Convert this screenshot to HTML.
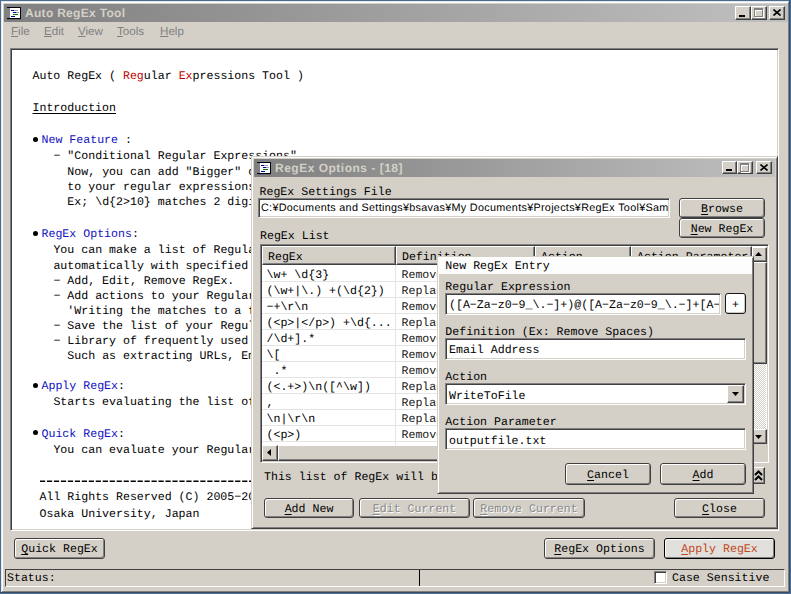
<!DOCTYPE html><html><head><meta charset="utf-8"><style>
*{box-sizing:border-box;margin:0;padding:0}
html,body{width:791px;height:594px;overflow:hidden;background:#45709f;position:relative;text-rendering:geometricPrecision}
div{position:absolute}
svg{position:absolute}
.title{background:linear-gradient(to right,#808080,#c0c0c0)}
.tt{color:#d4d0c8;font:bold 12px "Liberation Sans",sans-serif;white-space:nowrap;line-height:14px}
.cb{background:#d4d0c8;border:1px solid;border-color:#fff #404040 #404040 #fff;box-shadow:inset -1px -1px #808080,inset 1px 1px #d4d0c8}
.sunk{background:#fff;border:1px solid;border-color:#808080 #fff #fff #808080;box-shadow:inset 1px 1px #404040,inset -1px -1px #d4d0c8}
.m{font-family:"Liberation Mono",monospace;font-size:11.6px;white-space:pre;color:#000;line-height:14px}
.s{font-family:"Liberation Sans",sans-serif;font-size:12px;white-space:pre;color:#000;line-height:14px}
.btn{background:#d4d0c8;border:1px solid #404040;border-radius:3px;box-shadow:inset 1px 1px #fff,inset -1px -1px #808080}
.u{text-decoration:underline;text-underline-offset:2px}
.bl{color:#1010c0}
.rd{color:#c00000}
.dis{color:#8a8a8a;text-shadow:1px 1px #fff}
.chk{background-image:linear-gradient(45deg,#fff 25%,transparent 25%,transparent 75%,#fff 75%),linear-gradient(45deg,#fff 25%,#d4d0c8 25%,#d4d0c8 75%,#fff 75%);background-size:2px 2px;background-position:0 0,1px 1px}
</style></head><body>
<div style="left:0px;top:0px;width:790px;height:593px;background:#d4d0c8;"></div>
<div style="left:0px;top:0px;width:790px;height:1px;background:#4d6b8b;"></div>
<div style="left:0px;top:0px;width:1px;height:593px;background:#4d6b8b;"></div>
<div style="left:1px;top:1px;width:788px;height:1px;background:#dde8f0;"></div>
<div style="left:1px;top:1px;width:1px;height:591px;background:#dde8f0;"></div>
<div style="left:2px;top:2px;width:786px;height:1px;background:#fff;"></div>
<div style="left:2px;top:2px;width:1px;height:589px;background:#fff;"></div>
<div style="left:788px;top:2px;width:1px;height:590px;background:#808080;"></div>
<div style="left:2px;top:591px;width:787px;height:1px;background:#808080;"></div>
<div style="left:789px;top:0px;width:1px;height:593px;background:#3c4a5c;"></div>
<div style="left:0px;top:592px;width:790px;height:1px;background:#3c4a5c;"></div>
<div class="title" style="left:4px;top:4px;width:784px;height:18px"></div>
<svg style="left:7px;top:7px" width="14" height="13" viewBox="0 0 14 13">
<rect x="3" y="1" width="10" height="11" fill="#fff"/>
<rect x="0" y="0" width="14" height="1" fill="#000010"/>
<rect x="0" y="11" width="14" height="1.2" fill="#000010"/>
<rect x="13" y="0" width="1" height="12" fill="#000010"/>
<rect x="4" y="3" width="3" height="1" fill="#0000a0"/><rect x="7" y="3" width="4" height="1" fill="#a0a0a0"/>
<rect x="6" y="5" width="3" height="1" fill="#0000a0"/><rect x="9" y="5" width="3" height="1" fill="#a0a0a0"/>
<rect x="6" y="7" width="5" height="1" fill="#008000"/>
<rect x="4" y="9" width="4" height="1" fill="#0000a0"/>
</svg>
<div class="tt" style="left:25px;top:6px;letter-spacing:0.3px">Auto RegEx Tool</div>
<div class="cb" style="left:735px;top:6px;width:16px;height:14px"></div>
<div style="left:739px;top:15px;width:6px;height:2px;background:#000;"></div>
<div class="cb" style="left:751px;top:6px;width:16px;height:14px"></div>
<div style="left:755px;top:9px;width:9px;height:9px;border:1px solid #fff;border-top-width:2px"></div>
<div style="left:754px;top:8px;width:9px;height:9px;border:1px solid #808080;border-top-width:2px"></div>
<div class="cb" style="left:769px;top:6px;width:16px;height:14px"></div>
<svg style="left:773px;top:9px" width="8" height="7" viewBox="0 0 8 7"><path d="M0.5 0.5L7.5 6.5M7.5 0.5L0.5 6.5" stroke="#000" stroke-width="1.6"/></svg>
<div class="s" style="left:11px;top:25px;color:#808080;font-size:11.6px"><span class="u" style="text-underline-offset:1px">F</span>ile</div>
<div class="s" style="left:44px;top:25px;color:#808080;font-size:11.6px"><span class="u" style="text-underline-offset:1px">E</span>dit</div>
<div class="s" style="left:78px;top:25px;color:#808080;font-size:11.6px"><span class="u" style="text-underline-offset:1px">V</span>iew</div>
<div class="s" style="left:117px;top:25px;color:#808080;font-size:11.6px"><span class="u" style="text-underline-offset:1px">T</span>ools</div>
<div class="s" style="left:160px;top:25px;color:#808080;font-size:11.6px"><span class="u" style="text-underline-offset:1px">H</span>elp</div>
<div class="sunk" style="left:10px;top:48px;width:769px;height:483px"></div>
<div class="m" style="left:32.5px;top:70px;">Auto RegEx ( <span class="rd">Reg</span>ular <span class="rd">Ex</span>pressions Tool )</div>
<div class="m" style="left:32.5px;top:102px;"><span class="u">Introduction</span></div>
<div style="left:33px;top:136.5px;width:5px;height:5px;border-radius:50%;background:#000"></div>
<div class="m" style="left:41.5px;top:134px;"><span class="bl">New Feature</span> :</div>
<div class="m" style="left:53.41px;top:150px;">− &quot;Conditional Regular Expressions&quot;</div>
<div class="m" style="left:67.35px;top:166px;">Now, you can add &quot;Bigger&quot; or &quot;Smaller&quot; conditions</div>
<div class="m" style="left:67.35px;top:181px;">to your regular expressions.</div>
<div class="m" style="left:67.35px;top:196px;">Ex; \d{2&gt;10} matches 2 digit numbers bigger than 10</div>
<div style="left:33px;top:230.5px;width:5px;height:5px;border-radius:50%;background:#000"></div>
<div class="m" style="left:41.5px;top:228px;"><span class="bl">RegEx Options</span>:</div>
<div class="m" style="left:53.41px;top:244px;">You can make a list of Regular Expressions to be evaluated</div>
<div class="m" style="left:53.41px;top:260px;">automatically with specified actions.</div>
<div class="m" style="left:53.41px;top:275px;">− Add, Edit, Remove RegEx.</div>
<div class="m" style="left:53.41px;top:290px;">− Add actions to your Regular Expressions. Ex:</div>
<div class="m" style="left:67.35px;top:305px;">&#x27;Writing the matches to a file&#x27;</div>
<div class="m" style="left:53.41px;top:320px;">− Save the list of your Regular Expressions.</div>
<div class="m" style="left:53.41px;top:335px;">− Library of frequently used Regular Expressions.</div>
<div class="m" style="left:67.35px;top:350px;">Such as extracting URLs, Emails...</div>
<div style="left:33px;top:382.5px;width:5px;height:5px;border-radius:50%;background:#000"></div>
<div class="m" style="left:41.5px;top:380px;"><span class="bl">Apply RegEx</span>:</div>
<div class="m" style="left:53.41px;top:396px;">Starts evaluating the list of Regular Expressions.</div>
<div style="left:33px;top:430.4px;width:5px;height:5px;border-radius:50%;background:#000"></div>
<div class="m" style="left:41.5px;top:428px;"><span class="bl">Quick RegEx</span>:</div>
<div class="m" style="left:53.41px;top:444px;">You can evaluate your Regular Expressions quickly.</div>
<div class="m" style="left:39.47px;top:491px;">All Rights Reserved (C) 2005−2006</div>
<div class="m" style="left:39.47px;top:508px;">Osaka University, Japan</div>
<svg style="left:39px;top:478px" width="220" height="6"><line x1="1" y1="3.2" x2="220" y2="3.2" stroke="#000" stroke-width="1.6" stroke-dasharray="5.2 1.77"/></svg>
<div class="btn" style="left:14px;top:538px;width:91px;height:21px;"></div>
<div class="m " style="left:14px;top:543px;width:91px;text-align:center;color:#000"><span class="u">Q</span>uick RegEx</div>
<div class="btn" style="left:544px;top:538px;width:111px;height:21px;"></div>
<div class="m " style="left:544px;top:543px;width:111px;text-align:center;color:#000"><span class="u">R</span>egEx Options</div>
<div class="btn" style="left:664px;top:538px;width:111px;height:21px;border-color:#000;background:#e2e0dc"></div>
<div class="m " style="left:664px;top:543px;width:111px;text-align:center;color:#c04818"><span class="u">A</span>pply RegEx</div>
<div style="left:5px;top:569px;width:780px;height:18px;border:1px solid;border-color:#404040 #fff #fff #404040"></div>
<div style="left:419px;top:570px;width:1px;height:16px;background:#000;"></div>
<div class="m" style="left:7px;top:572px;">Status:</div>
<div class="sunk" style="left:654px;top:571px;width:13px;height:13px"></div>
<div class="m" style="left:672px;top:572px;">Case Sensitive</div>
<div style="left:251px;top:156px;width:527px;height:373px;background:#d4d0c8;border:1px solid;border-color:#d4d0c8 #404040 #404040 #d4d0c8;box-shadow:inset 1px 1px #fff,inset -1px -1px #808080"></div>
<div class="title" style="left:254px;top:159px;width:521px;height:18px"></div>
<svg style="left:257px;top:162px" width="14" height="13" viewBox="0 0 14 13">
<rect x="3" y="1" width="10" height="11" fill="#fff"/>
<rect x="0" y="0" width="14" height="1" fill="#000010"/>
<rect x="0" y="11" width="14" height="1.2" fill="#000010"/>
<rect x="13" y="0" width="1" height="12" fill="#000010"/>
<rect x="4" y="3" width="3" height="1" fill="#0000a0"/><rect x="7" y="3" width="4" height="1" fill="#a0a0a0"/>
<rect x="6" y="5" width="3" height="1" fill="#0000a0"/><rect x="9" y="5" width="3" height="1" fill="#a0a0a0"/>
<rect x="6" y="7" width="5" height="1" fill="#008000"/>
<rect x="4" y="9" width="4" height="1" fill="#0000a0"/>
</svg>
<div class="tt" style="left:275px;top:161px;letter-spacing:0.5px">RegEx Options - [18]</div>
<div class="cb" style="left:722px;top:161px;width:15px;height:13px"></div>
<div style="left:726px;top:169px;width:6px;height:2px;background:#000;"></div>
<div class="cb" style="left:737px;top:161px;width:16px;height:13px"></div>
<div style="left:741px;top:164px;width:9px;height:9px;border:1px solid #fff;border-top-width:2px"></div>
<div style="left:740px;top:163px;width:9px;height:9px;border:1px solid #808080;border-top-width:2px"></div>
<div class="cb" style="left:756px;top:161px;width:16px;height:13px"></div>
<svg style="left:760px;top:164px" width="8" height="7" viewBox="0 0 8 7"><path d="M0.5 0.5L7.5 6.5M7.5 0.5L0.5 6.5" stroke="#000" stroke-width="1.6"/></svg>
<div class="m" style="left:259.5px;top:186px;">RegEx Settings File</div>
<div class="sunk" style="left:258px;top:198px;width:412px;height:20px"></div>
<div class="s" style="left:261px;top:201.5px;font-size:10.8px;letter-spacing:0.3px;width:407px;overflow:hidden;line-height:12px">C:¥Documents and Settings¥bsavas¥My Documents¥Projects¥RegEx Tool¥Sample.xml</div>
<div class="btn" style="left:679px;top:198px;width:86px;height:20px;"></div>
<div class="m " style="left:679px;top:203px;width:86px;text-align:center;color:#000"><span class="u">B</span>rowse</div>
<div class="btn" style="left:679px;top:218px;width:86px;height:20px;"></div>
<div class="m " style="left:679px;top:223px;width:86px;text-align:center;color:#000"><span class="u">N</span>ew RegEx</div>
<div class="m" style="left:260px;top:230px;">RegEx List</div>
<div style="left:260px;top:244px;width:509px;height:219px;background:#fff;border:1px solid;border-color:#808080 #fff #fff #808080;box-shadow:inset 1px 1px #404040,inset -1px -1px #d4d0c8"></div>
<div class="cb" style="left:262px;top:246px;width:134px;height:19px"></div>
<div class="m" style="left:268px;top:251px;">RegEx</div>
<div class="cb" style="left:396px;top:246px;width:139px;height:19px"></div>
<div class="m" style="left:402px;top:251px;">Definition</div>
<div class="cb" style="left:535px;top:246px;width:96px;height:19px"></div>
<div class="m" style="left:541px;top:251px;">Action</div>
<div class="cb" style="left:631px;top:246px;width:121px;height:19px"></div>
<div class="m" style="left:637px;top:251px;">Action Parameter</div>
<div style="left:262px;top:281px;width:490px;height:1px;background:#e4e4e4;"></div>
<div class="m" style="left:266.5px;top:269px;">\w+ \d{3}</div>
<div class="m" style="left:401.5px;top:269px;color:#202020">Remove</div>
<div style="left:262px;top:297px;width:490px;height:1px;background:#e4e4e4;"></div>
<div class="m" style="left:266.5px;top:285px;">(\w+|\.) +(\d{2})</div>
<div class="m" style="left:401.5px;top:285px;color:#202020">Replace</div>
<div style="left:262px;top:313px;width:490px;height:1px;background:#e4e4e4;"></div>
<div class="m" style="left:266.5px;top:301px;">−+\r\n</div>
<div class="m" style="left:401.5px;top:301px;color:#202020">Remove</div>
<div style="left:262px;top:329px;width:490px;height:1px;background:#e4e4e4;"></div>
<div class="m" style="left:266.5px;top:317px;">(&lt;p&gt;|&lt;/p&gt;) +\d{...</div>
<div class="m" style="left:401.5px;top:317px;color:#202020">Replace</div>
<div style="left:262px;top:345px;width:490px;height:1px;background:#e4e4e4;"></div>
<div class="m" style="left:266.5px;top:333px;">/\d+].*</div>
<div class="m" style="left:401.5px;top:333px;color:#202020">Remove</div>
<div style="left:262px;top:361px;width:490px;height:1px;background:#e4e4e4;"></div>
<div class="m" style="left:266.5px;top:349px;">\[</div>
<div class="m" style="left:401.5px;top:349px;color:#202020">Remove</div>
<div style="left:262px;top:377px;width:490px;height:1px;background:#e4e4e4;"></div>
<div class="m" style="left:266.5px;top:365px;"> .*</div>
<div class="m" style="left:401.5px;top:365px;color:#202020">Remove</div>
<div style="left:262px;top:393px;width:490px;height:1px;background:#e4e4e4;"></div>
<div class="m" style="left:266.5px;top:381px;">(&lt;.+&gt;)\n([^\w])</div>
<div class="m" style="left:401.5px;top:381px;color:#202020">Replace</div>
<div style="left:262px;top:409px;width:490px;height:1px;background:#e4e4e4;"></div>
<div class="m" style="left:266.5px;top:397px;">,</div>
<div class="m" style="left:401.5px;top:397px;color:#202020">Replace</div>
<div style="left:262px;top:425px;width:490px;height:1px;background:#e4e4e4;"></div>
<div class="m" style="left:266.5px;top:413px;">\n|\r\n</div>
<div class="m" style="left:401.5px;top:413px;color:#202020">Replace</div>
<div style="left:262px;top:441px;width:490px;height:1px;background:#e4e4e4;"></div>
<div class="m" style="left:266.5px;top:429px;">(&lt;p&gt;)</div>
<div class="m" style="left:401.5px;top:429px;color:#202020">Remove</div>
<div style="left:395px;top:265px;width:1px;height:180px;background:#e4e4e4;"></div>
<div class="chk" style="left:752px;top:247px;width:14px;height:197px"></div>
<div class="cb" style="left:752px;top:247px;width:15px;height:15px"></div>
<svg style="left:755px;top:252px" width="7" height="4" viewBox="0 0 7 4"><path d="M0 4L3.5 0L7 4Z" fill="#000"/></svg>
<div class="cb" style="left:752px;top:262px;width:15px;height:102px"></div>
<div class="cb" style="left:752px;top:429px;width:15px;height:15px"></div>
<svg style="left:755px;top:435px" width="7" height="4" viewBox="0 0 7 4"><path d="M0 0L7 0L3.5 4Z" fill="#000"/></svg>
<div class="cb" style="left:262px;top:445px;width:16px;height:16px"></div>
<svg style="left:267px;top:449px" width="4" height="7" viewBox="0 0 4 7"><path d="M4 0L4 7L0 3.5Z" fill="#000"/></svg>
<div class="cb" style="left:278px;top:445px;width:474px;height:16px"></div>
<div style="left:752px;top:444px;width:15px;height:17px;background:#d4d0c8;"></div>
<div class="m" style="left:264px;top:471px;">This list of RegEx will be saved automatically.</div>
<div class="btn" style="left:264px;top:498px;width:90px;height:20px;"></div>
<div class="m " style="left:264px;top:503px;width:90px;text-align:center;color:#000"><span class="u">A</span>dd New</div>
<div class="btn" style="left:359px;top:498px;width:111px;height:20px;"></div>
<div class="m dis" style="left:359px;top:503px;width:111px;text-align:center;color:#8a8a8a"><span class="u">E</span>dit Current</div>
<div class="btn" style="left:473px;top:498px;width:112px;height:20px;"></div>
<div class="m dis" style="left:473px;top:503px;width:112px;text-align:center;color:#8a8a8a"><span class="u">R</span>emove Current</div>
<div class="btn" style="left:674px;top:498px;width:91px;height:20px;"></div>
<div class="m " style="left:674px;top:503px;width:91px;text-align:center;color:#000"><span class="u">C</span>lose</div>
<div class="cb" style="left:750px;top:467px;width:15px;height:17px"></div>
<div style="left:437px;top:256px;width:317px;height:238px;background:#d4d0c8;border:1px solid;border-color:#d4d0c8 #404040 #404040 #d4d0c8;box-shadow:inset 1px 1px #fff,inset -1px -1px #808080"></div>
<div style="left:439px;top:258px;width:313px;height:16px;background:#fdfdfd;"></div>
<div class="m" style="left:445.3px;top:260px;">New RegEx Entry</div>
<div class="m" style="left:445.3px;top:281px;">Regular Expression</div>
<div class="sunk" style="left:445px;top:293px;width:276px;height:22px"></div>
<div class="m" style="left:449px;top:299px;width:270px;overflow:hidden">([A−Za−z0−9_\.−]+)@([A−Za−z0−9_\.−]+[A−Za−z]{2,4})</div>
<div class="btn" style="left:725px;top:293px;width:21px;height:21px;background:#fff;border-color:#181818;box-shadow:inset -1px -1px #c8c8c8"></div>
<div class="m " style="left:725px;top:299px;width:21px;text-align:center;color:#000">+</div>
<div class="m" style="left:445.3px;top:326px;">Definition (Ex: Remove Spaces)</div>
<div class="sunk" style="left:445px;top:338px;width:301px;height:22px"></div>
<div class="m" style="left:449px;top:344px;">Email Address</div>
<div class="m" style="left:445.3px;top:371px;">Action</div>
<div class="sunk" style="left:445px;top:383px;width:301px;height:22px"></div>
<div class="m" style="left:449px;top:390px;">WriteToFile</div>
<div class="cb" style="left:727px;top:385px;width:17px;height:18px"></div>
<svg style="left:732px;top:392px" width="7" height="4" viewBox="0 0 7 4"><path d="M0 0L7 0L3.5 4Z" fill="#000"/></svg>
<div class="m" style="left:445.3px;top:416px;">Action Parameter</div>
<div class="sunk" style="left:445px;top:428px;width:301px;height:22px"></div>
<div class="m" style="left:449px;top:435px;">outputfile.txt</div>
<div class="btn" style="left:565px;top:463px;width:86px;height:22px;"></div>
<div class="m " style="left:565px;top:469px;width:86px;text-align:center;color:#000"><span class="u">C</span>ancel</div>
<div class="btn" style="left:660px;top:463px;width:86px;height:22px;"></div>
<div class="m " style="left:660px;top:469px;width:86px;text-align:center;color:#000"><span class="u">A</span>dd</div>
<svg style="left:754px;top:470px" width="9" height="11" viewBox="0 0 9 11"><path d="M1 5L4.5 1.5L8 5M1 10L4.5 6.5L8 10" stroke="#000" stroke-width="2" fill="none"/></svg>
</body></html>
